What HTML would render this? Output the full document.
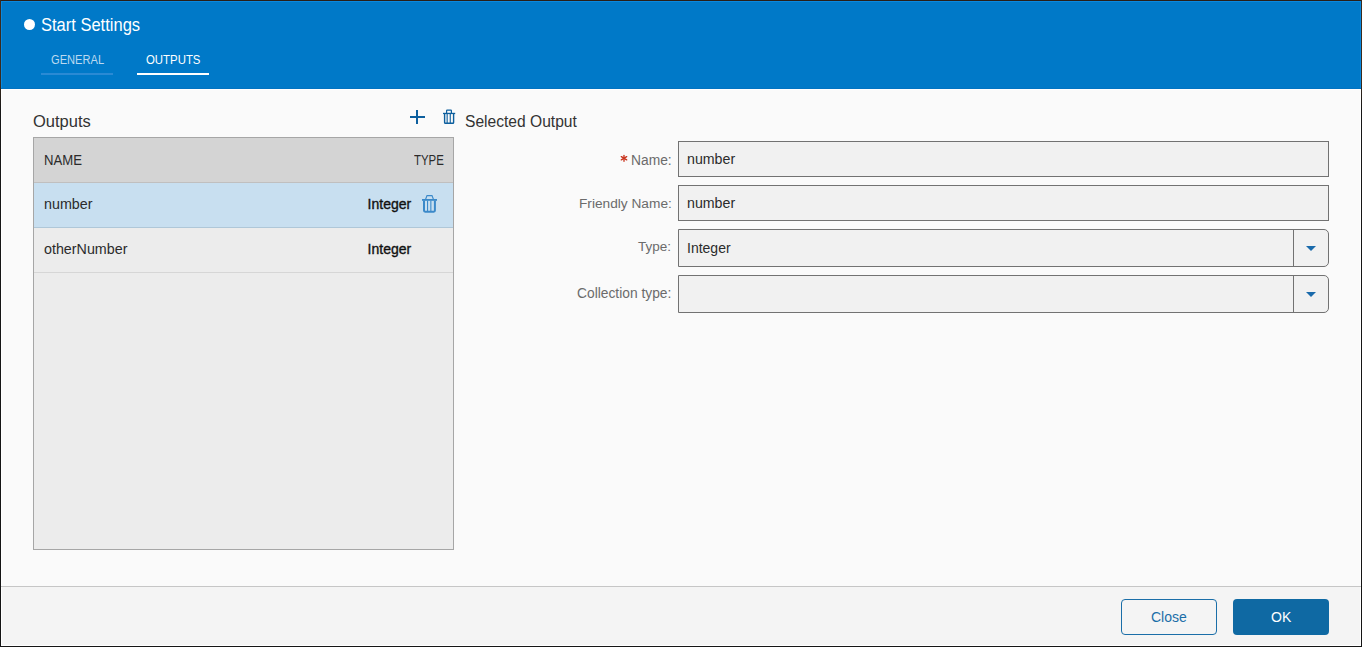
<!DOCTYPE html>
<html><head><meta charset="utf-8">
<style>
html,body{margin:0;padding:0;}
body{width:1362px;height:647px;position:relative;overflow:hidden;background:#151515;font-family:"Liberation Sans",sans-serif;}
.a{position:absolute;}
.t{position:absolute;white-space:nowrap;line-height:1;}
#dlg{left:1px;top:1px;width:1360px;height:645px;background:#fafafa;overflow:hidden;}
#hdr{left:0;top:0;width:1360px;height:88px;background:#0079c8;}
#foot{left:0;top:585px;width:1360px;height:59px;background:#f4f4f4;border-top:1px solid #c6c6c6;}
</style></head>
<body>
<div class="a" style="left:0;top:0;width:1362px;height:1px;background:#2a1f17"></div>
<div class="a" style="left:0;top:0;width:1px;height:647px;background:linear-gradient(#3a2b1e 0,#3a2b1e 80px,#161616 110px,#141414 647px)"></div>
<div class="a" style="right:0;top:0;width:1px;height:647px;background:linear-gradient(#3a2b1e 0,#3a2b1e 80px,#161616 110px,#141414 647px)"></div>
<div id="dlg" class="a">
  <div id="hdr" class="a">
    <div class="a" style="left:0;top:0;width:1360px;height:1px;background:#0a88de"></div>
    <div class="a" style="left:0;top:0;width:1px;height:88px;background:#0a88de"></div>
    <div class="a" style="right:0;top:0;width:1px;height:88px;background:#0a88de"></div>
    <div class="a" style="left:0;top:87px;width:1360px;height:1px;background:#0273c2"></div>
    <div class="a" style="left:22.6px;top:17.8px;width:11.2px;height:11.2px;border-radius:50%;background:#fff"></div>
    <div class="t" style="left:40px;top:16px;font-size:17.5px;transform:scaleX(0.943);transform-origin:0 0;color:#fff">Start Settings</div>
    <div class="t" style="left:50px;top:53px;font-size:12px;transform:scaleX(0.925);transform-origin:0 0;color:#bcd9f0">GENERAL</div>
    <div class="a" style="left:40px;top:72px;width:72px;height:2px;background:#2a8ad4"></div>
    <div class="t" style="left:145px;top:53px;font-size:12px;transform:scaleX(0.95);transform-origin:0 0;color:#fff">OUTPUTS</div>
    <div class="a" style="left:136px;top:72px;width:72px;height:2px;background:#fff"></div>
  </div>
  <!-- body highlight -->
  <div class="a" style="left:0;top:88px;width:1px;height:498px;background:#fff"></div>
  <div class="a" style="left:0;top:88px;width:1360px;height:1px;background:#fff"></div>
  <div class="a" style="right:0;top:88px;width:1px;height:498px;background:#fff"></div>

  <div class="t" style="left:32px;top:112px;font-size:16.5px;color:#333">Outputs</div>

  <!-- plus icon -->
  <svg class="a" style="left:409px;top:109px" width="16" height="16" viewBox="0 0 16 16">
    <rect x="0" y="6" width="15" height="2" fill="#0d5f9e"/>
    <rect x="6" y="0" width="2" height="14" fill="#0d5f9e"/>
  </svg>
  <!-- top trash icon -->
  <svg class="a" style="left:439px;top:107px" width="16" height="16" viewBox="0 0 16 16">
    <path d="M6.6 4.9 V2.7 Q6.6 2.2 7.1 2.2 H10.9 Q11.4 2.2 11.4 2.7 V4.9" fill="none" stroke="#0d5f9e" stroke-width="1.2"/>
    <rect x="3" y="4.8" width="12.2" height="1.3" fill="#0d5f9e"/>
    <path d="M4.6 6 V14.4 Q4.6 15.2 5.4 15.2 H12.8 Q13.6 15.2 13.6 14.4 V6" fill="none" stroke="#0d5f9e" stroke-width="1.4"/>
    <rect x="6.6" y="6" width="1.1" height="9" fill="#0d5f9e"/>
    <rect x="9.7" y="6" width="1.1" height="9" fill="#0d5f9e"/>
  </svg>

  <div class="t" style="left:464px;top:113px;font-size:15.6px;color:#333">Selected Output</div>

  <!-- table -->
  <div class="a" style="left:32px;top:136px;width:419px;height:411px;border:1px solid #a6a6a6;background:#ececec">
    <div class="a" style="left:0;top:0;width:419px;height:44px;background:#d4d4d4"></div>
    <div class="a" style="left:0;top:44px;width:419px;height:1px;background:#c0bfbf"></div>
    <div class="a" style="left:0;top:45px;width:419px;height:44px;background:#c8dff0"></div>
    <div class="a" style="left:0;top:89px;width:419px;height:1px;background:#afc7d8"></div>
    <div class="a" style="left:0;top:134px;width:419px;height:1px;background:#d6d6d6"></div>
  </div>
  <div class="t" style="left:43px;top:152px;font-size:14.3px;transform:scaleX(0.92);transform-origin:0 0;color:#2b2b2b">NAME</div>
  <div class="t" style="left:413px;top:152px;font-size:14.3px;transform:scaleX(0.8);transform-origin:0 0;color:#2b2b2b">TYPE</div>
  <div class="t" style="left:43px;top:196px;font-size:14.3px;color:#2b2b2b">number</div>
  <div class="t" style="left:366.6px;top:196px;font-size:14px;-webkit-text-stroke:0.35px #111;color:#111">Integer</div>
  <div class="t" style="left:43px;top:241px;font-size:14.3px;color:#2b2b2b">otherNumber</div>
  <div class="t" style="left:366.6px;top:241px;font-size:14px;-webkit-text-stroke:0.35px #111;color:#111">Integer</div>
  <!-- row trash -->
  <svg class="a" style="left:417px;top:191px" width="24" height="24" viewBox="0 0 24 24">
    <path d="M7.6 7.2 L9 3.6 H14 L15.4 7.2" fill="none" stroke="#3b89c9" stroke-width="1.1"/>
    <rect x="4" y="7" width="15" height="1.8" fill="#3b89c9"/>
    <path d="M6 8.5 V18.6 Q6 19.7 7.1 19.7 H15.8 Q16.9 19.7 16.9 18.6 V8.5" fill="none" stroke="#3b89c9" stroke-width="2"/>
    <rect x="9" y="8.5" width="1.1" height="10.5" fill="#3b89c9"/>
    <rect x="12.3" y="8.5" width="1.1" height="10.5" fill="#3b89c9"/>
  </svg>

  <!-- form -->
  <svg class="a" style="left:617px;top:151px" width="12" height="12" viewBox="0 0 12 12">
    <g stroke="#c9351f" stroke-width="1.35" stroke-linecap="round" fill="none">
      <path d="M6 3.4 V9.2"/><path d="M3.3 4.7 L8.7 7.9"/><path d="M3.3 7.9 L8.7 4.7"/>
    </g>
  </svg>
  <div class="t" style="left:630px;top:153px;font-size:13.8px;color:#6b6b6b">Name:</div>
  <div class="t" style="left:578px;top:196px;font-size:13.7px;color:#6b6b6b">Friendly Name:</div>
  <div class="t" style="left:637px;top:239px;font-size:13.5px;color:#6b6b6b">Type:</div>
  <div class="t" style="left:576px;top:286px;font-size:13.8px;color:#6b6b6b">Collection type:</div>

  <div class="a" style="left:677px;top:140px;width:649px;height:34px;border:1px solid #727272;background:#f1f1f1"></div>
  <div class="a" style="left:677px;top:184px;width:649px;height:34px;border:1px solid #727272;background:#f1f1f1"></div>
  <div class="a" style="left:677px;top:228px;width:649px;height:36px;border:1px solid #727272;border-radius:0 5px 5px 0;background:#f1f1f1">
    <div class="a" style="left:614px;top:0;width:1px;height:36px;background:#727272"></div>
    <div class="a" style="left:627px;top:16px;width:0;height:0;border-left:5px solid transparent;border-right:5px solid transparent;border-top:5px solid #1a6aab"></div>
  </div>
  <div class="a" style="left:677px;top:274px;width:649px;height:36px;border:1px solid #727272;border-radius:0 5px 5px 0;background:#f1f1f1">
    <div class="a" style="left:614px;top:0;width:1px;height:36px;background:#727272"></div>
    <div class="a" style="left:627px;top:16px;width:0;height:0;border-left:5px solid transparent;border-right:5px solid transparent;border-top:5px solid #1a6aab"></div>
  </div>
  <div class="t" style="left:686px;top:151px;font-size:14.2px;color:#2b2b2b">number</div>
  <div class="t" style="left:686px;top:195px;font-size:14.2px;color:#2b2b2b">number</div>
  <div class="t" style="left:686px;top:240px;font-size:14px;color:#2b2b2b">Integer</div>

  <!-- footer -->
  <div id="foot" class="a">
    <div class="a" style="left:0;top:0;width:1px;height:59px;background:#fff"></div>
    <div class="a" style="right:0;top:0;width:1px;height:59px;background:#fff"></div>
    <div class="a" style="left:0;bottom:0;width:1360px;height:1px;background:#fff"></div>
    <div class="a" style="left:1120px;top:12px;width:94px;height:34px;border:1px solid #1a6ea8;border-radius:4px;background:#f4f4f4"></div>
    <div class="t" style="left:1150px;top:23px;font-size:14px;color:#1a6ea8">Close</div>
    <div class="a" style="left:1232px;top:12px;width:96px;height:36px;border-radius:4px;background:#0f69a3"></div>
    <div class="t" style="left:1270px;top:23px;font-size:14px;color:#fff">OK</div>
  </div>
</div>
</body></html>
